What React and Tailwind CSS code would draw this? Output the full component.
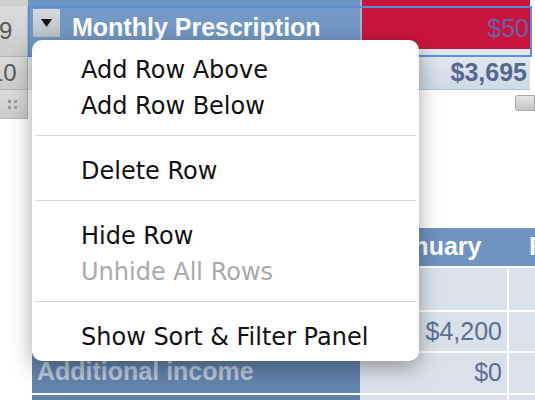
import React from 'react';

const menuItems = [
    { label: 'Add Row Above' },
    { label: 'Add Row Below' },
    { sep: true },
    { label: 'Delete Row' },
    { sep: true },
    { label: 'Hide Row' },
    { label: 'Unhide All Rows', disabled: true },
    { sep: true },
    { label: 'Show Sort & Filter Panel' },
];

function RowHeader({ children, className = '' }) {
    return (
        <div className={`w-[28px] shrink-0 bg-gradient-to-b from-[#dcdcdc] to-[#cbcbcb] border-r border-b border-[#b5b5b5] flex items-center overflow-hidden ${className}`}>
            {children}
        </div>
    );
}

function ContextMenu() {
    return (
        <div className="absolute left-[32px] top-[40px] w-[387px] h-[321px] bg-white rounded-[10px] shadow-[0_6px_22px_rgba(0,0,0,0.35)] pt-[12px] font-['DejaVu_Sans',sans-serif] text-[24px]">
            {menuItems.map((item, i) =>
                item.sep ? (
                    <div key={i} className="mt-[11px] mb-[17px] mx-[3px] h-px bg-[#dadada]" />
                ) : (
                    <div
                        key={i}
                        className={`h-[36px] leading-[36px] pl-[49px] whitespace-nowrap ${item.disabled ? 'text-[#a9a9a9]' : 'text-[#111]'}`}
                    >
                        {item.label}
                    </div>
                )
            )}
        </div>
    );
}

export default function App() {
    return (
        <div className="relative w-[535px] h-[400px] overflow-hidden bg-white font-['Liberation_Sans',Arial,sans-serif]">
            {/* top table */}
            <div className="flex flex-col">
                <div className="flex h-[6px]">
                    <div className="w-[28px] bg-[#d0d0d0]" />
                    <div className="w-[332px] bg-[#7094c0]" />
                    <div className="w-[2px] bg-[#9fb6d2]" />
                    <div className="w-[168px] bg-[#c8153d]" />
                </div>
                <div className="flex h-[51px]">
                    <RowHeader className="justify-start">
                        <span className="text-[24px] text-[#5a5a5a] -ml-[1px]">9</span>
                    </RowHeader>
                    <div className="flex flex-1 border-2 border-[#5a8fd8] mr-[3px]">
                        <div className="w-[330px] bg-[#7398c4] flex items-start pt-[1px] pl-[3px]">
                            <div className="w-[27px] h-[28px] bg-gradient-to-b from-[#d6d9de] to-[#bcc1c8] flex items-center justify-center">
                                <svg width="11" height="8" viewBox="0 0 11 8">
                                    <path d="M0 0 H11 L5.5 8 Z" fill="#111" />
                                </svg>
                            </div>
                            <span className="ml-[12px] mt-[6px] text-[25px] font-bold text-white leading-none">Monthly Prescription</span>
                        </div>
                        <div className="w-[2px] bg-[#9fb6d2]" />
                        <div className="flex-1 flex flex-col">
                            <div className="h-[41px] bg-[#c8153d] flex items-center justify-end pr-[1px]">
                                <span className="text-[25px] text-[#6d5fa6]">$50</span>
                            </div>
                            <div className="flex-1 bg-[#dfe6ee]" />
                        </div>
                    </div>
                </div>
                <div className="flex h-[33px]">
                    <RowHeader className="justify-start">
                        <span className="text-[24px] text-[#5a5a5a] -ml-[10px]">10</span>
                    </RowHeader>
                    <div className="w-[334px] bg-[#e6ecf2]" />
                    <div className="w-[168px] bg-gradient-to-b from-[#dfe7ef] to-[#cfdae6] border-b border-[#b9c5d3] flex items-center justify-end pr-[3px]">
                        <span className="text-[25px] font-bold text-[#56688f]">$3,695</span>
                    </div>
                </div>
                <div className="flex h-[29px]">
                    <RowHeader className="justify-start pl-[8px]">
                        <div className="grid grid-cols-2 gap-[3px]">
                            <span className="w-[3px] h-[3px] bg-[#9a9a9a]" />
                            <span className="w-[3px] h-[3px] bg-[#9a9a9a]" />
                            <span className="w-[3px] h-[3px] bg-[#9a9a9a]" />
                            <span className="w-[3px] h-[3px] bg-[#9a9a9a]" />
                        </div>
                    </RowHeader>
                    <div className="flex-1 flex justify-end items-start pt-[5px]">
                        <div className="w-[20px] h-[16px] rounded-l-[3px] bg-gradient-to-b from-[#e4e4e4] to-[#c6c6c6] border border-[#a8a8a8]" />
                    </div>
                </div>
            </div>

            {/* bottom table */}
            <div className="mt-[109px] ml-[32px] flex">
                <div className="w-[328px] shrink-0 flex flex-col gap-[2px]">
                    <div className="h-[38px] bg-[#6f93bf]" />
                    <div className="h-[42px] bg-[#6c8fba]" />
                    <div className="h-[39px] bg-[#6889b3]" />
                    <div className="h-[40px] bg-[#6384ac] flex items-center pl-[5px]">
                        <span className="text-[25px] font-bold text-[#b9c8db] whitespace-nowrap -mt-[3px]">Additional income</span>
                    </div>
                    <div className="h-[20px] bg-[#5f7fa6]" />
                </div>
                <div className="flex-1 min-w-0 flex flex-col gap-[2px]">
                    <div className="h-[38px] bg-[#6f94c0] flex overflow-hidden">
                        <div className="w-[147px] shrink-0 flex items-center justify-center">
                            <span className="text-[25px] font-bold text-white">January</span>
                        </div>
                        <div className="w-[147px] shrink-0 flex items-center justify-center ml-[2px]">
                            <span className="text-[25px] font-bold text-white">February</span>
                        </div>
                    </div>
                    {[['', 42], ['$4,200', 39], ['$0', 40], ['', 20]].map(([v, h], i) => (
                        <div key={i} className="flex gap-[2px]" style={{ height: h }}>
                            <div className="w-[147px] shrink-0 bg-[#d9e2ea] flex items-center justify-end pr-[5px]">
                                <span className="text-[25px] text-[#5d6e95]">{v}</span>
                            </div>
                            <div className="flex-1 bg-[#d9e2ea]" />
                        </div>
                    ))}
                </div>
            </div>

            <ContextMenu />
        </div>
    );
}
